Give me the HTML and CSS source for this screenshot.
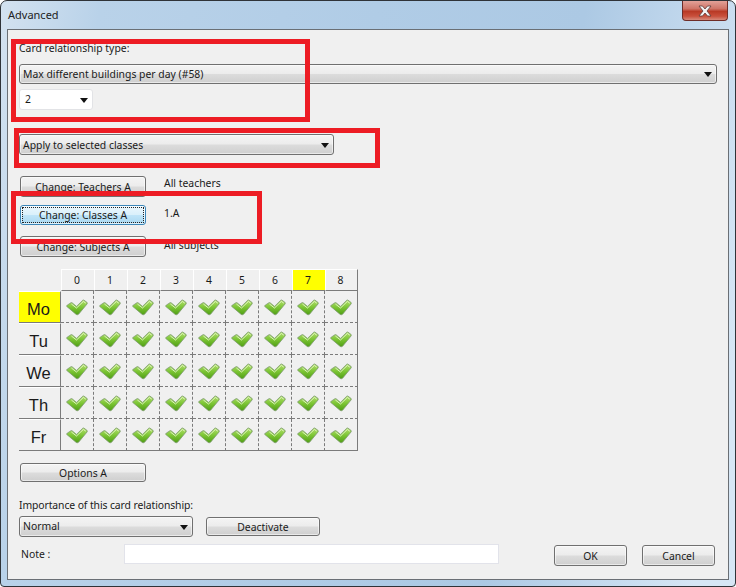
FILE: index.html
```html
<!DOCTYPE html>
<html lang="en">
<head>
    <meta charset="UTF-8">
    <title>Advanced</title>
    <link rel="stylesheet" href="styles.css">
</head>
<body>
    <svg class="defs" width="0" height="0">
        <defs>
            <linearGradient id="check-fill" x1="0" y1="0" x2="0" y2="1">
                <stop offset="0" stop-color="#b4e070"/>
                <stop offset="0.5" stop-color="#7cc534"/>
                <stop offset="1" stop-color="#4f9e14"/>
            </linearGradient>
            <symbol id="check" viewBox="0 0 22 17">
                <path d="M0.5 7.2 L1.2 6.2 L5 3.7 L6 3.7 L10.5 7.4 L16.8 1.2 L17.8 1 L21.2 3.6 L21.2 4.8 L12.6 15.2 L11.2 15.8 L10.2 15.4 Z" fill="url(#check-fill)" stroke="#7d9a70" stroke-width="0.8" stroke-linejoin="round"/>
                <path d="M5.4 5 L10.5 9 L17.4 2.4 L19.8 4.2" fill="none" stroke="#e6f6cc" stroke-width="0.9"/>
            </symbol>
        </defs>
    </svg>

    <div class="window">
        <div class="titlebar">
            <span class="title">Advanced</span>
            <div class="close">
                <svg width="14" height="12" viewBox="0 0 14 12">
                    <path d="M1 1 H4.5 L7 4 L9.5 1 H13 L9 6 L13 11 H9.5 L7 8 L4.5 11 H1 L5 6 Z" fill="#f4f4f4" stroke="#5a3a38" stroke-width="0.8"/>
                </svg>
            </div>
        </div>

        <div class="client">
            <div class="label">Card relationship type:</div>
            <div class="combo combo-type">Max different buildings per day (#58)<i class="arrow"></i></div>
            <div class="combo combo-value">2<i class="arrow"></i></div>
            <div class="combo combo-apply">Apply to selected classes<i class="arrow"></i></div>

            <div class="change-rows">
                <div class="change-row row-teachers">
                    <button class="btn btn-change">Change: Teachers A</button>
                    <span class="change-text">All teachers</span>
                </div>
                <div class="change-row row-classes">
                    <button class="btn btn-change btn-focus"><span>Change: Classes A</span></button>
                    <span class="change-text">1.A</span>
                </div>
                <div class="change-row row-subjects">
                    <button class="btn btn-change">Change: Subjects A</button>
                    <span class="change-text">All subjects</span>
                </div>
            </div>

            <div class="grid">
                <div class="corner"></div>
                <div class="head">0</div>
                <div class="head">1</div>
                <div class="head">2</div>
                <div class="head">3</div>
                <div class="head">4</div>
                <div class="head">5</div>
                <div class="head">6</div>
                <div class="head head-on">7</div>
                <div class="head head-last">8</div>

                <div class="day day-on">Mo</div>
                <div class="cell"><svg><use href="#check"/></svg></div>
                <div class="cell"><svg><use href="#check"/></svg></div>
                <div class="cell"><svg><use href="#check"/></svg></div>
                <div class="cell"><svg><use href="#check"/></svg></div>
                <div class="cell"><svg><use href="#check"/></svg></div>
                <div class="cell"><svg><use href="#check"/></svg></div>
                <div class="cell"><svg><use href="#check"/></svg></div>
                <div class="cell"><svg><use href="#check"/></svg></div>
                <div class="cell cell-last"><svg><use href="#check"/></svg></div>

                <div class="day">Tu</div>
                <div class="cell"><svg><use href="#check"/></svg></div>
                <div class="cell"><svg><use href="#check"/></svg></div>
                <div class="cell"><svg><use href="#check"/></svg></div>
                <div class="cell"><svg><use href="#check"/></svg></div>
                <div class="cell"><svg><use href="#check"/></svg></div>
                <div class="cell"><svg><use href="#check"/></svg></div>
                <div class="cell"><svg><use href="#check"/></svg></div>
                <div class="cell"><svg><use href="#check"/></svg></div>
                <div class="cell cell-last"><svg><use href="#check"/></svg></div>

                <div class="day">We</div>
                <div class="cell"><svg><use href="#check"/></svg></div>
                <div class="cell"><svg><use href="#check"/></svg></div>
                <div class="cell"><svg><use href="#check"/></svg></div>
                <div class="cell"><svg><use href="#check"/></svg></div>
                <div class="cell"><svg><use href="#check"/></svg></div>
                <div class="cell"><svg><use href="#check"/></svg></div>
                <div class="cell"><svg><use href="#check"/></svg></div>
                <div class="cell"><svg><use href="#check"/></svg></div>
                <div class="cell cell-last"><svg><use href="#check"/></svg></div>

                <div class="day">Th</div>
                <div class="cell"><svg><use href="#check"/></svg></div>
                <div class="cell"><svg><use href="#check"/></svg></div>
                <div class="cell"><svg><use href="#check"/></svg></div>
                <div class="cell"><svg><use href="#check"/></svg></div>
                <div class="cell"><svg><use href="#check"/></svg></div>
                <div class="cell"><svg><use href="#check"/></svg></div>
                <div class="cell"><svg><use href="#check"/></svg></div>
                <div class="cell"><svg><use href="#check"/></svg></div>
                <div class="cell cell-last"><svg><use href="#check"/></svg></div>

                <div class="day day-last">Fr</div>
                <div class="cell cell-bottom"><svg><use href="#check"/></svg></div>
                <div class="cell cell-bottom"><svg><use href="#check"/></svg></div>
                <div class="cell cell-bottom"><svg><use href="#check"/></svg></div>
                <div class="cell cell-bottom"><svg><use href="#check"/></svg></div>
                <div class="cell cell-bottom"><svg><use href="#check"/></svg></div>
                <div class="cell cell-bottom"><svg><use href="#check"/></svg></div>
                <div class="cell cell-bottom"><svg><use href="#check"/></svg></div>
                <div class="cell cell-bottom"><svg><use href="#check"/></svg></div>
                <div class="cell cell-bottom cell-last"><svg><use href="#check"/></svg></div>
            </div>

            <button class="btn btn-change btn-options">Options A</button>

            <div class="label label-importance">Importance of this card relationship:</div>
            <div class="importance-row">
                <div class="combo combo-normal">Normal<i class="arrow"></i></div>
                <button class="btn btn-deactivate">Deactivate</button>
            </div>

            <div class="footer-row">
                <span class="note-label">Note :</span>
                <input class="note-input" type="text">
                <button class="btn btn-ok">OK</button>
                <button class="btn btn-cancel">Cancel</button>
            </div>
        </div>

        <!-- red marks drawn on top of the screenshot -->
        <div class="mark mark-type"></div>
        <div class="mark mark-apply"></div>
        <div class="mark mark-classes"></div>
    </div>
</body>
</html>
```

FILE: styles.css
```css
* {
    box-sizing: border-box;
}
html, body {
    margin: 0;
    padding: 0;
    background: #fff;
}
body {
    font-family: "Noto Sans", "Liberation Sans", sans-serif;
    font-size: 10.4px;
    color: #1a1a1a;
}
.defs {
    position: absolute;
}
.window {
    position: relative;
    width: 736px;
    height: 587px;
    overflow: hidden;
    border: 1px solid #2f3338;
    border-radius: 7px 7px 4px 4px;
    background: linear-gradient(100deg, #d3e2f0 0%, #b9d2e9 12%, #b0cce6 45%, #acc9e4 70%, #d6e6f5 95%);
    display: flex;
    flex-direction: column;
}
.titlebar {
    height: 28px;
    flex: none;
    display: flex;
    justify-content: space-between;
    align-items: flex-start;
    padding-left: 7px;
}
.title {
    margin-top: 6px;
    font-size: 11px;
    line-height: 16px;
    color: #222;
}
.close {
    width: 46px;
    height: 20px;
    margin-right: 7px;
    border: 1px solid #6e2d28;
    border-top: 0;
    border-radius: 0 0 4px 4px;
    background: linear-gradient(#e2a198 0%, #cf7568 40%, #b93a26 55%, #c9503c 80%, #d58a7c 100%);
    display: flex;
    align-items: center;
    justify-content: center;
}
.client {
    width: 722px;
    height: 551px;
    margin-left: 6px;
    padding: 11px 0 0 11px;
    border: 1px solid #6a6f75;
    background: #f0f0f0;
}
.label {
    height: 14px;
    line-height: 14px;
}
.btn, .combo {
    font-family: inherit;
    font-size: 10.4px;
    color: #1a1a1a;
    border: 1px solid #707070;
    border-radius: 3px;
    background: linear-gradient(#f4f4f4 0%, #ececec 48%, #dcdcdc 52%, #cfcfcf 100%);
    box-shadow: inset 0 0 0 1px rgba(255, 255, 255, 0.55);
}
.btn {
    display: block;
    padding: 0;
    text-align: center;
}
.combo {
    position: relative;
    padding-left: 3px;
    line-height: 18px;
}
.arrow {
    position: absolute;
    right: 4px;
    top: 50%;
    margin-top: -2px;
    border: 4px solid transparent;
    border-top: 5px solid #111;
    border-bottom: 0;
}
.combo-type {
    width: 698px;
    height: 20px;
    margin-top: 9px;
}
.combo-value {
    width: 74px;
    height: 21px;
    margin-top: 5px;
    padding-left: 5px;
    border-color: #e2e3e6;
    background: #fff;
    box-shadow: none;
}
.combo-apply {
    width: 315px;
    height: 21px;
    margin-top: 24px;
    line-height: 20px;
}
.change-rows {
    margin: 21px 0 0 1px;
}
.change-row {
    display: flex;
    gap: 18px;
}
.row-teachers {
    height: 29px;
}
.row-classes {
    height: 31px;
}
.row-classes .change-text {
    margin-top: 1px;
}
.row-subjects {
    height: 33px;
}
.row-subjects .change-text {
    margin-top: 2px;
}
.btn-change {
    width: 126px;
    height: 21px;
    flex: none;
}
.change-text {
    line-height: 14px;
}
.btn-focus {
    height: 20px;
    border-color: #3b86b8;
    background: linear-gradient(#ebf7fd 0%, #daf0fb 48%, #bfe4f8 52%, #a9d8f1 100%);
    box-shadow: inset 0 0 0 1px rgba(255, 255, 255, 0.6);
    padding: 1px;
}
.btn-focus span {
    display: block;
    height: 16px;
    line-height: 14px;
    border: 1px dotted #222;
}
.grid {
    display: grid;
    grid-template-columns: 42px repeat(9, 33px);
    grid-template-rows: 22px repeat(5, 32px);
}
.head {
    border-top: 1px solid #fff;
    border-left: 1px solid #fff;
    border-bottom: 1px solid #7b7b7b;
    display: flex;
    align-items: center;
    justify-content: center;
    padding-right: 2px;
    font-size: 10.4px;
}
.head-on {
    background: #ff0;
}
.head-last {
    border-right: 1px solid #7b7b7b;
}
.day {
    border-top: 1px solid #fff;
    border-bottom: 1px solid #7b7b7b;
    border-right: 1px solid #7b7b7b;
    display: flex;
    align-items: center;
    justify-content: center;
    padding: 5px 2px 0 0;
    font-family: "Liberation Sans", sans-serif;
    font-size: 16.5px;
}
.day-on {
    background: #ff0;
}
.cell {
    padding-top: 2px;
    border-right: 1px dashed #7b7b7b;
    border-bottom: 1px dashed #7b7b7b;
    display: flex;
    align-items: center;
    justify-content: center;
}
.cell svg {
    width: 22px;
    height: 17px;
}
.cell-last {
    border-right: 1px solid #7b7b7b;
}
.cell-bottom {
    border-bottom: 1px solid #7b7b7b;
}
.btn-options {
    margin: 12px 0 0 1px;
    height: 19px;
}
.label-importance {
    margin-top: 16px;
    letter-spacing: -0.1px;
}
.importance-row {
    margin-top: 4px;
    display: flex;
    align-items: center;
    gap: 13px;
}
.combo-normal {
    width: 174px;
    height: 21px;
}
.btn-deactivate {
    width: 114px;
    height: 19px;
}
.footer-row {
    margin-top: 7px;
    display: flex;
    align-items: flex-start;
}
.note-label {
    width: 103px;
    margin-left: 2px;
    line-height: 20px;
}
.note-input {
    width: 375px;
    height: 20px;
    padding: 0;
    border: 1px solid #e2e3ea;
    background: #fff;
}
.btn-ok, .btn-cancel {
    width: 73px;
    height: 21px;
    margin-top: 1px;
}
.btn-ok {
    margin-left: 55px;
}
.btn-cancel {
    margin-left: 15px;
}
.mark {
    position: absolute;
    border: 5px solid #ed1c24;
}
.mark-type {
    left: 10px;
    top: 38px;
    width: 299px;
    height: 83px;
}
.mark-apply {
    left: 13px;
    top: 127px;
    width: 366px;
    height: 40px;
}
.mark-classes {
    left: 10px;
    top: 190px;
    width: 251px;
    height: 53px;
}
```
